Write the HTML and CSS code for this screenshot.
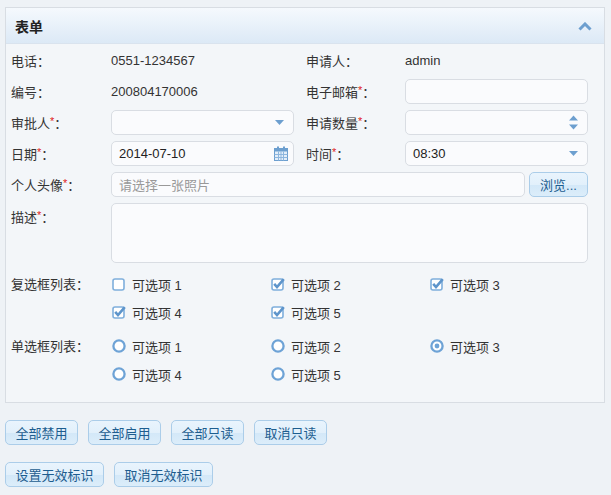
FILE: index.html
```html
<!DOCTYPE html>
<html lang="zh">
<head>
<meta charset="utf-8">
<title>表单</title>
<link rel="stylesheet" href="styles.css">
</head>
<body>
<div class="panel">
  <div class="panel-head">
    <span class="panel-title">表单</span>
    <svg class="collapse" width="14" height="9" viewBox="0 0 14 9"><path d="M1.5 7.5 L7 2 L12.5 7.5" fill="none" stroke="#6d9fcf" stroke-width="3"/></svg>
  </div>
  <div class="panel-body">
    <div class="grid">
      <div class="lbl">电话<span class="c">：</span></div>
      <div class="val">0551-1234567</div>
      <div class="lbl lbl2">申请人<span class="c">：</span></div>
      <div class="val">admin</div>

      <div class="lbl">编号<span class="c">：</span></div>
      <div class="val">200804170006</div>
      <div class="lbl lbl2">电子邮箱<i>*</i><span class="c">：</span></div>
      <div class="input"></div>

      <div class="lbl">审批人<i>*</i><span class="c">：</span></div>
      <div class="input">
        <svg class="trig" width="9" height="5" viewBox="0 0 9 5"><path d="M0 0 H9 L4.5 5 Z" fill="#6d9fcf"/></svg>
      </div>
      <div class="lbl lbl2">申请数量<i>*</i><span class="c">：</span></div>
      <div class="input">
        <svg class="spin" width="9" height="15" viewBox="0 0 9 15"><path d="M0 5.5 L4.5 0.5 L9 5.5 Z M0 9.5 H9 L4.5 14.5 Z" fill="#6d9fcf"/></svg>
      </div>

      <div class="lbl">日期<i>*</i><span class="c">：</span></div>
      <div class="input"><span class="txt">2014-07-10</span>
        <svg class="cal" width="14" height="15" viewBox="0 0 14 15">
          <rect x="0.5" y="2.5" width="13" height="12" fill="#e3eef9" stroke="#6d9fcf"/>
          <rect x="0.5" y="2.5" width="13" height="3" fill="#6d9fcf"/>
          <rect x="3" y="0.5" width="2" height="4" fill="#6d9fcf"/>
          <rect x="9" y="0.5" width="2" height="4" fill="#6d9fcf"/>
          <path d="M4.5 5.5 V14.5 M7 5.5 V14.5 M9.5 5.5 V14.5 M0.5 8.5 H13.5 M0.5 11.5 H13.5" stroke="#8db6de" stroke-width="1"/>
        </svg>
      </div>
      <div class="lbl lbl2">时间<i>*</i><span class="c">：</span></div>
      <div class="input"><span class="txt">08:30</span>
        <svg class="trig" width="9" height="5" viewBox="0 0 9 5"><path d="M0 0 H9 L4.5 5 Z" fill="#6d9fcf"/></svg>
      </div>

      <div class="lbl">个人头像<i>*</i><span class="c">：</span></div>
      <div class="filewrap">
        <div class="input grow"><span class="ph">请选择一张照片</span></div>
        <div class="btn browse">浏览...</div>
      </div>

      <div class="lbl top">描述<i>*</i><span class="c">：</span></div>
      <div class="input area"></div>
    </div>

    <div class="opts first">
      <div class="lbl">复选框列表<span class="c">：</span></div>
      <div class="optgrid">
        <div class="opt"><svg width="14" height="13" viewBox="0 0 14 13"><rect x="1" y="1" width="11" height="11" rx="2" fill="#fff" stroke="#7fafdc" stroke-width="1.6"/></svg><span>可选项 1</span></div>
        <div class="opt"><svg width="14" height="13" viewBox="0 0 14 13"><rect x="1" y="1" width="11" height="11" rx="2" fill="#fff" stroke="#7fafdc" stroke-width="1.6"/><path d="M3.2 5.8 L6 9 L12.8 1.2" fill="none" stroke="#5e95cb" stroke-width="2.6"/></svg><span>可选项 2</span></div>
        <div class="opt"><svg width="14" height="13" viewBox="0 0 14 13"><rect x="1" y="1" width="11" height="11" rx="2" fill="#fff" stroke="#7fafdc" stroke-width="1.6"/><path d="M3.2 5.8 L6 9 L12.8 1.2" fill="none" stroke="#5e95cb" stroke-width="2.6"/></svg><span>可选项 3</span></div>
        <div class="opt"><svg width="14" height="13" viewBox="0 0 14 13"><rect x="1" y="1" width="11" height="11" rx="2" fill="#fff" stroke="#7fafdc" stroke-width="1.6"/><path d="M3.2 5.8 L6 9 L12.8 1.2" fill="none" stroke="#5e95cb" stroke-width="2.6"/></svg><span>可选项 4</span></div>
        <div class="opt"><svg width="14" height="13" viewBox="0 0 14 13"><rect x="1" y="1" width="11" height="11" rx="2" fill="#fff" stroke="#7fafdc" stroke-width="1.6"/><path d="M3.2 5.8 L6 9 L12.8 1.2" fill="none" stroke="#5e95cb" stroke-width="2.6"/></svg><span>可选项 5</span></div>
      </div>
    </div>

    <div class="opts">
      <div class="lbl">单选框列表<span class="c">：</span></div>
      <div class="optgrid">
        <div class="opt"><svg width="14" height="14" viewBox="0 0 14 14"><circle cx="7" cy="7" r="5.6" fill="#fff" stroke="#6ea3d6" stroke-width="2.3"/></svg><span>可选项 1</span></div>
        <div class="opt"><svg width="14" height="14" viewBox="0 0 14 14"><circle cx="7" cy="7" r="5.6" fill="#fff" stroke="#6ea3d6" stroke-width="2.3"/></svg><span>可选项 2</span></div>
        <div class="opt"><svg width="14" height="14" viewBox="0 0 14 14"><circle cx="7" cy="7" r="5.6" fill="#fff" stroke="#6ea3d6" stroke-width="2.3"/><circle cx="7" cy="7" r="2.4" fill="#6ea3d6"/></svg><span>可选项 3</span></div>
        <div class="opt"><svg width="14" height="14" viewBox="0 0 14 14"><circle cx="7" cy="7" r="5.6" fill="#fff" stroke="#6ea3d6" stroke-width="2.3"/></svg><span>可选项 4</span></div>
        <div class="opt"><svg width="14" height="14" viewBox="0 0 14 14"><circle cx="7" cy="7" r="5.6" fill="#fff" stroke="#6ea3d6" stroke-width="2.3"/></svg><span>可选项 5</span></div>
      </div>
    </div>
  </div>
</div>

<div class="btnrow">
  <div class="btn">全部禁用</div>
  <div class="btn">全部启用</div>
  <div class="btn">全部只读</div>
  <div class="btn">取消只读</div>
</div>
<div class="btnrow">
  <div class="btn wide">设置无效标识</div>
  <div class="btn wide">取消无效标识</div>
</div>
</body>
</html>
```

FILE: styles.css
```css
* { box-sizing: border-box; }
body {
  margin: 0;
  padding: 7px 7px 0 5px;
  background: #eef2f6;
  font-family: "Liberation Sans", "Noto Sans CJK SC", sans-serif;
  font-size: 13px;
  color: #333;
}
.panel {
  width: 600px;
  border: 1px solid #d8dde3;
  background: #f3f6f9;
}
.panel-head {
  height: 36px;
  display: flex;
  align-items: center;
  justify-content: space-between;
  padding: 0 12px 0 9px;
  background: linear-gradient(#f5f9fd, #dce9f6);
  border-bottom: 1px solid #d9e3ee;
}
.panel-title {
  font-weight: bold;
  font-size: 14px;
  color: #222;
}
.collapse { margin-top: 1px; }
.panel-body {
  padding: 4px 15px 14px 5px;
}
.grid {
  display: grid;
  grid-template-columns: 100px 183px 111px 183px;
  grid-template-rows: 25px 25px 25px 25px 25px 60px;
  row-gap: 6px;
  align-items: center;
}
.lbl { color: #333; white-space: nowrap; }
.lbl i { color: #e02020; font-style: normal; font-size: 11px; vertical-align: 3px; }
.c { font-family: "Noto Sans CJK TC", sans-serif; }
.lbl2 { padding-left: 12px; }
.lbl.top { align-self: start; padding-top: 4px; }
.val { color: #333; }
.input {
  height: 25px;
  border: 1px solid #d9dde3;
  border-radius: 5px;
  background: #fafbfd;
  display: flex;
  align-items: center;
  padding: 0 7px;
}
.txt { color: #222; flex: 1; }
.ph { color: #999; }
.trig { margin-left: auto; margin-right: 2px; }
.spin { margin-left: auto; margin-right: 2px; }
.cal { margin-left: auto; margin-right: -2px; }
.filewrap {
  grid-column: 2 / 5;
  display: flex;
  gap: 4px;
}
.grow { flex: 1; }
.grid .area {
  grid-column: 2 / 5;
  height: 60px;
}
.opts {
  display: flex;
}
.opts.first { margin-top: 7px; }
.opts + .opts { margin-top: 6px; }
.opts .lbl { width: 100px; height: 28px; line-height: 28px; }
.optgrid {
  display: grid;
  grid-template-columns: 159px 159px 159px;
  grid-auto-rows: 28px;
  align-items: center;
}
.opt {
  display: flex;
  align-items: center;
  padding-left: 1px;
}
.opt svg { flex: none; margin-right: 6px; }
.opt span { color: #333; }
.btnrow {
  display: flex;
  gap: 10px;
  margin-top: 17px;
}
.btn {
  width: 73px;
  height: 25px;
  border: 1px solid #abcde9;
  border-radius: 5px;
  background: linear-gradient(#e9f4fd 0%, #e2f0fb 50%, #d3e8f8 52%, #dcedfa 100%);
  color: #1d5d8f;
  display: flex;
  align-items: center;
  justify-content: center;
}
.btn.wide { width: 99px; }
.browse { width: 59px; }
```
